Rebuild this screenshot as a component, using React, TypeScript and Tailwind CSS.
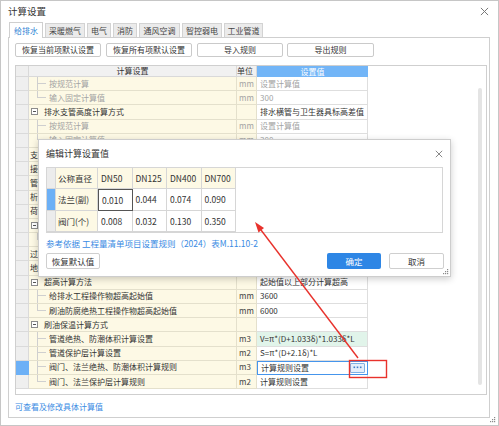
import React from "react";

type Row = {
  kind: "group" | "leaf" | "top";
  name: string;
  unit?: string;
  value?: string;
  muted?: boolean;
  last?: boolean;
  green?: boolean;
  selected?: boolean;
};

const rows: Row[] = [
  { kind: "leaf", name: "按规范计算", unit: "mm", value: "设置计算值", muted: true },
  { kind: "leaf", name: "输入固定计算值", unit: "mm", value: "300", muted: true, last: true },
  { kind: "group", name: "排水支管高度计算方式", value: "排水横管与卫生器具标高差值" },
  { kind: "leaf", name: "按规范计算", unit: "mm", value: "设置计算值", muted: true },
  { kind: "leaf", name: "输入固定计算值", unit: "mm", value: "300", muted: true, last: true },
  { kind: "top", name: "支" },
  { kind: "top", name: "接" },
  { kind: "top", name: "管" },
  { kind: "top", name: "析" },
  { kind: "top", name: "荷" },
  { kind: "group", name: "" },
  { kind: "leaf", name: "", last: true },
  { kind: "top", name: "过" },
  { kind: "top", name: "地" },
  { kind: "group", name: "超高计算方法", value: "起始值以上部分计算超高" },
  { kind: "leaf", name: "给排水工程操作物超高起始值", unit: "mm", value: "3600" },
  { kind: "leaf", name: "刷油防腐绝热工程操作物超高起始值", unit: "mm", value: "6000", last: true },
  { kind: "group", name: "刷油保温计算方式", value: "" },
  { kind: "leaf", name: "管道绝热、防潮体积计算设置", unit: "m3", value: "V=π*(D+1.033δ)*1.033δ*L", green: true },
  { kind: "leaf", name: "管道保护层计算设置", unit: "m2", value: "S=π*(D+2.1δ)*L" },
  { kind: "leaf", name: "阀门、法兰绝热、防潮体积计算规则", unit: "m3", value: "计算规则设置", selected: true },
  { kind: "leaf", name: "阀门、法兰保护层计算规则", unit: "m2", value: "计算规则设置", last: true },
];

const tabs = [
  { name: "给排水", w: "w-[34px]" },
  { name: "采暖燃气", w: "w-[40px]" },
  { name: "电气", w: "w-[24px]" },
  { name: "消防", w: "w-[24px]" },
  { name: "通风空调", w: "w-[41px]" },
  { name: "智控弱电", w: "w-[40px]" },
  { name: "工业管道", w: "w-[39px]" },
];

const sizes = ["DN50", "DN125", "DN400", "DN700"];
const amounts = [
  { name: "法兰(副)", vals: ["0.010", "0.044", "0.074", "0.090"], active: true },
  { name: "阀门(个)", vals: ["0.008", "0.032", "0.130", "0.350"] },
];

const CloseX = ({ size = 9 }: { size?: number }) => (
  <svg width={size} height={size} viewBox="0 0 10 10" stroke="#777" strokeWidth="1.1">
    <path d="M1 1L9 9M9 1L1 9" />
  </svg>
);

const Grip = () => (
  <svg width="6" height="6" viewBox="0 0 6 6" fill="#8a8a8a">
    <rect x="4" y="0" width="1.2" height="1.2" />
    <rect x="2" y="2" width="1.2" height="1.2" />
    <rect x="4" y="2" width="1.2" height="1.2" />
    <rect x="0" y="4" width="1.2" height="1.2" />
    <rect x="2" y="4" width="1.2" height="1.2" />
    <rect x="4" y="4" width="1.2" height="1.2" />
  </svg>
);

// small "..." picker button shown in the active value cell
const MoreButton = () => (
  <span className="w-[15px] h-[10px] border border-[#7fb1e6] bg-[#e4eefa] rounded-[1px] flex items-center justify-center">
    <svg width="9" height="3" viewBox="0 0 9 3" fill="#3f7fcc">
      <rect x="0.5" y="0.5" width="1.6" height="1.6" />
      <rect x="3.7" y="0.5" width="1.6" height="1.6" />
      <rect x="6.9" y="0.5" width="1.6" height="1.6" />
    </svg>
  </span>
);

function TreeName({ row }: { row: Row }) {
  const color = row.muted ? "text-[#a3a3a3]" : "text-[#333]";
  if (row.kind === "group") {
    return (
      <div className="flex items-center h-full pl-[2px]">
        <span className="w-[7px] h-[7px] border border-[#8c8c8c] bg-white flex items-center justify-center mr-[6px]">
          <span className="w-[3px] h-px bg-[#555]" />
        </span>
        <span className="text-[#333]">{row.name}</span>
      </div>
    );
  }
  if (row.kind === "top") {
    return (
      <div className="flex items-center h-full pl-[1px]">
        <span className="text-[#333]">{row.name}</span>
      </div>
    );
  }
  return (
    <div className="flex items-center h-full">
      <span className="ml-[8px] w-[9px] h-full flex flex-col mr-[3px]">
        <span className="h-1/2 border-l border-b border-[#cfcfcf]" />
        <span className={`h-1/2 ${row.last ? "" : "border-l border-[#cfcfcf]"}`} />
      </span>
      <span className={color}>{row.name}</span>
    </div>
  );
}

function SettingsTable() {
  return (
    <div className="relative mt-[8px] w-[472px] h-[330px] border border-[#cfcfcf] bg-white">
      {/* header */}
      <div className="flex h-[11px] text-[8px] text-[#333]">
        <div className="w-[13px] bg-[#efefef] border-r border-b border-[#d9d9d9]" />
        <div className="w-[208px] bg-[#f1f1f1] border-r border-b border-[#d9d9d9] flex items-center justify-center">计算设置</div>
        <div className="w-[20px] bg-[#f1f1f1] border-r border-b border-[#d9d9d9] flex items-center overflow-hidden whitespace-nowrap">单位</div>
        <div className="w-[111px] bg-[#72b5f7] text-white flex items-center justify-center">设置值</div>
      </div>
      {rows.map((row, i) => (
        <div key={i} className="flex h-[14.2px] text-[8px] leading-none">
          <div
            className={`w-[13px] border-r border-b ${
              row.selected ? "bg-[#6cb0f6] border-[#6cb0f6]" : "bg-[#efefef] border-[#dadada]"
            }`}
          />
          <div className="w-[208px] bg-[#fdf9e5] border-r border-b border-[#e4e0cc] whitespace-nowrap overflow-hidden">
            <TreeName row={row} />
          </div>
          <div
            className={`w-[20px] bg-[#fdf9e5] border-r border-b border-[#e4e0cc] flex items-center pl-[2px] ${
              row.muted ? "text-[#a3a3a3]" : "text-[#444]"
            }`}
          >
            {row.unit}
          </div>
          {row.selected ? (
            <div className="w-[111px] border border-[#4595ec] bg-white flex items-center justify-between pl-[3px] pr-[2px] text-[#333]">
              <span>{row.value}</span>
              <MoreButton />
            </div>
          ) : (
            <div
              className={`w-[111px] border-r border-b border-[#dedede] flex items-center pl-[3px] whitespace-nowrap overflow-hidden ${
                row.green ? "bg-[#e1f4ea]" : "bg-white"
              } ${row.muted ? "text-[#a3a3a3]" : "text-[#333]"}`}
            >
              {row.value}
            </div>
          )}
        </div>
      ))}
      {/* vertical scrollbar */}
      <div className="absolute left-[462px] top-[22px] w-[4px] h-[297px] rounded-full bg-[#e4e4e4]" />
    </div>
  );
}

function EditDialog() {
  return (
    <div className="absolute left-[37px] top-[138px] w-[413px] h-[138px] bg-white border border-[#cdcdcd] shadow-[0_2px_7px_rgba(0,0,0,0.2)] flex flex-col">
      <div className="h-[27px] flex items-center justify-between pl-[7px] pr-[7px]">
        <span className="text-[9px] text-[#333]">编辑计算设置值</span>
        <CloseX size={8} />
      </div>
      <div className="mx-[7px] h-[66px] border border-[#d6d6d6]">
        <div className="flex flex-col w-[189px] text-[8.5px] text-[#333] leading-none">
          <div className="flex h-[21px]">
            <div className="w-[9px] bg-[#ececec] border-r border-b border-[#d6d6d6]" />
            <div className="w-[42px] bg-[#fdf9e5] border-r border-b border-[#d6d6d6] flex items-center pl-[2px]">公称直径</div>
            {sizes.map((s) => (
              <div key={s} className="w-[34.5px] bg-[#fdf9e5] border-r border-b border-[#d6d6d6] flex items-center pl-[3px]">
                {s}
              </div>
            ))}
          </div>
          {amounts.map((r) => (
            <div key={r.name} className="flex h-[21.5px]">
              <div
                className={`w-[9px] border-r border-b ${
                  r.active ? "bg-[#6cb0f6] border-[#d6d6d6]" : "bg-[#ececec] border-[#d6d6d6]"
                }`}
              />
              <div className="w-[42px] bg-[#fdf9e5] border-r border-b border-[#d6d6d6] flex items-center pl-[2px]">{r.name}</div>
              {r.vals.map((v, j) => (
                <div
                  key={j}
                  className={`w-[34.5px] flex items-center pl-[3px] bg-white ${
                    r.active && j === 0 ? "border border-[#555]" : "border-r border-b border-[#d6d6d6]"
                  }`}
                >
                  {v}
                </div>
              ))}
            </div>
          ))}
        </div>
      </div>
      <div className="h-[20px] flex items-center pl-[7px] text-[8.5px] text-[#3a8be3]">
        参考依据 工程量清单项目设置规则（2024）表M.11.10-2
      </div>
      <div className="flex items-center justify-between pl-[7px] pr-[6px]">
        <button className="w-[54px] h-[16px] border border-[#cfcfcf] rounded-[2px] bg-white text-[8.5px] text-[#333]">恢复默认值</button>
        <div className="flex gap-[8px]">
          <button className="w-[54px] h-[16px] rounded-[2px] bg-[#2e86e5] text-[8.5px] text-white">确定</button>
          <button className="w-[55px] h-[16px] border border-[#cfcfcf] rounded-[2px] bg-white text-[8.5px] text-[#333]">取消</button>
        </div>
      </div>
      <div className="absolute right-[1px] bottom-[1px]">
        <Grip />
      </div>
    </div>
  );
}

export default function App() {
  return (
    <div className="relative w-[499px] h-[426px] overflow-hidden bg-white border border-[#c6c6c6] [font-family:'Noto_Sans_CJK_SC','Liberation_Sans',sans-serif]">
      <div className="h-[21px] flex items-center justify-between pl-[7px] pr-[9px]">
        <span className="text-[9.5px] text-[#333]">计算设置</span>
        <CloseX size={9} />
      </div>

      <div className="flex items-end gap-[2px] pl-[8px] h-[15px]">
        {tabs.map((t, i) =>
          i === 0 ? (
            <div
              key={t.name}
              className={`${t.w} h-[16px] -mb-px relative z-10 bg-white border border-b-0 border-[#cfcfcf] flex items-center justify-center text-[8px] text-[#2a7fd4]`}
            >
              {t.name}
            </div>
          ) : (
            <div
              key={t.name}
              className={`${t.w} h-[14px] bg-[#ebebeb] border border-b-0 border-[#d3d3d3] flex items-center justify-center text-[8px] text-[#444]`}
            >
              {t.name}
            </div>
          )
        )}
      </div>

      <div className="ml-[7px] w-[482px] h-[381px] border border-[#cfcfcf] pl-[6px] pt-[5px]">
        <div className="flex gap-[5px]">
          {["恢复当前项默认设置", "恢复所有项默认设置", "导入规则", "导出规则"].map((b, i) => (
            <button
              key={b}
              className={`${i === 3 ? "w-[87px] ml-[-1px]" : "w-[86px]"} h-[14px] border border-[#cacaca] rounded-[2px] bg-white text-[8px] text-[#333] leading-none`}
            >
              {b}
            </button>
          ))}
        </div>
        <SettingsTable />
        <div className="mt-[6px] text-[8px] text-[#3a8be3]">可查看及修改具体计算值</div>
      </div>

      <EditDialog />

      {/* red arrow and highlight box */}
      <svg className="absolute inset-0 pointer-events-none" width="499" height="426">
        <line x1="357" y1="357" x2="260" y2="229" stroke="#e8322c" strokeWidth="1.4" />
        <polygon points="254,221 263,227 257.5,231.5" fill="#e8322c" />
        <rect x="348.5" y="359.5" width="37" height="17" fill="none" stroke="#e8322c" strokeWidth="1.4" />
      </svg>

      <div className="absolute right-[2px] bottom-[2px]">
        <Grip />
      </div>
    </div>
  );
}
